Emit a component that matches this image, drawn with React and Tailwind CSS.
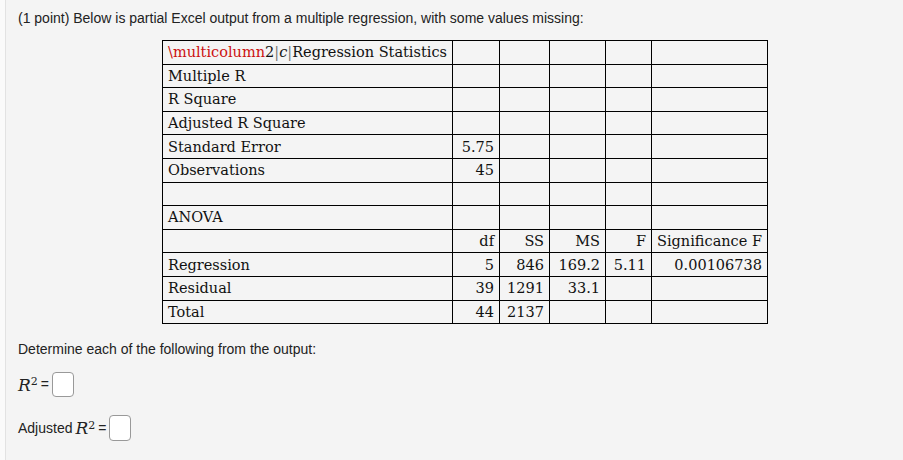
export default function App() {
  const serif = { fontFamily: '"DejaVu Serif", "Liberation Serif", serif' };
  const rows = [
    [<span><span className="text-[#cc1111]">\multicolumn</span>2<span className="text-[#777]">|</span><i>c</i><span className="text-[#777]">|</span>Regression Statistics</span>, "", "", "", "", ""],
    ["Multiple R", "", "", "", "", ""],
    ["R Square", "", "", "", "", ""],
    ["Adjusted R Square", "", "", "", "", ""],
    ["Standard Error", "5.75", "", "", "", ""],
    ["Observations", "45", "", "", "", ""],
    ["", "", "", "", "", ""],
    ["ANOVA", "", "", "", "", ""],
    ["", "df", "SS", "MS", "F", "Significance F"],
    ["Regression", "5", "846", "169.2", "5.11", "0.00106738"],
    ["Residual", "39", "1291", "33.1", "", ""],
    ["Total", "44", "2137", "", "", ""],
  ];
  const widths = ["w-[290px]", "w-[47px]", "w-[50px]", "w-[56px]", "w-[46px]", "w-[116px]"];

  return (
    <div className="min-h-[460px] bg-[#fafafa] pl-[5px]" style={{ fontFamily: '"Liberation Sans", Arial, sans-serif' }}>
      <div className="min-h-[460px] bg-[#f4f4f4] border-l border-[#e2e2e2] pl-[12px] pt-[9px] text-[14px] text-[#222]">
        <p className="leading-[18px]">(1 point) Below is partial Excel output from a multiple regression, with some values missing:</p>
        <table className="mt-[13px] ml-[144px] w-[606px] table-fixed border-collapse text-[14.5px] text-[#111]" style={serif}>
          <colgroup>
            {widths.map((w, i) => (
              <col key={i} className={w} />
            ))}
          </colgroup>
          <tbody>
            {rows.map((row, r) => (
              <tr key={r} className="h-[23.6px]">
                {row.map((cell, c) => (
                  <td
                    key={c}
                    className={`${c === 0 ? "text-left" : "text-right"} border border-black px-[5px] py-0 leading-[18px] whitespace-nowrap`}
                  >
                    {cell}
                  </td>
                ))}
              </tr>
            ))}
          </tbody>
        </table>
        <p className="mt-[16px] leading-[18px]">Determine each of the following from the output:</p>
        <div className="mt-[14px] flex items-center gap-[3px]">
          <span className="text-[17px] italic leading-[24px]" style={serif}>R<sup className="text-[11px] not-italic">2</sup></span>
          <span>=</span>
          <span className="w-[22px] h-[25px] border border-[#999] rounded-[4px] bg-white"></span>
        </div>
        <div className="mt-[18px] flex items-center gap-[3px]">
          <span>Adjusted</span>
          <span className="text-[17px] italic leading-[24px]" style={serif}>R<sup className="text-[11px] not-italic">2</sup></span>
          <span>=</span>
          <span className="w-[22px] h-[26px] border border-[#999] rounded-[4px] bg-white"></span>
        </div>
      </div>
    </div>
  );
}
